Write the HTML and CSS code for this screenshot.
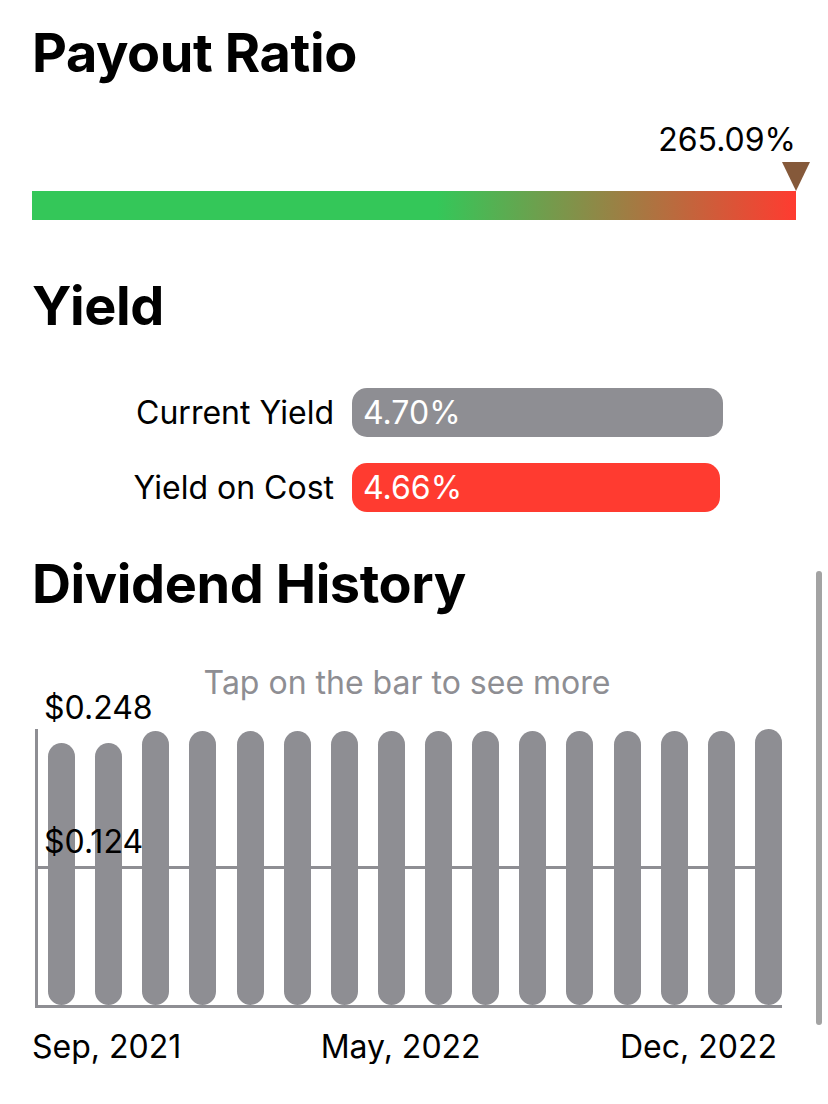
FILE: index.html
```html
<!DOCTYPE html>
<html lang="en">
<head>
    <meta charset="UTF-8">
    <meta name="viewport" content="width=device-width, initial-scale=1.0">
    <title>Dividend Details</title>
    <link rel="stylesheet" href="styles.css">
</head>
<body>
    <div class="scrollbar"></div>

    <h1 class="title title-first">Payout Ratio</h1>
    <div class="gauge">
        <div class="gauge-value">265.09%</div>
        <div class="gauge-track">
            <div class="gauge-marker" style="left: 100%"></div>
        </div>
    </div>

    <h1 class="title title-yield">Yield</h1>
    <div class="yield-grid">
        <div class="yield-label">Current Yield</div>
        <div class="yield-bar yield-current" style="width: 100%">4.70%</div>
        <div class="yield-label">Yield on Cost</div>
        <div class="yield-bar yield-cost" style="width: 99.1%">4.66%</div>
    </div>

    <h1 class="title title-history">Dividend History</h1>
    <div class="chart">
        <div class="chart-hint">Tap on the bar to see more</div>
        <div class="plot">
            <div class="plot-label label-max">$0.248</div>
            <div class="plot-label label-mid">$0.124</div>
            <div class="gridline"></div>
            <div class="bars">
                <div class="bar" style="height: 95%"></div>
                <div class="bar" style="height: 95%"></div>
                <div class="bar" style="height: 99.3%"></div>
                <div class="bar" style="height: 99.3%"></div>
                <div class="bar" style="height: 99.3%"></div>
                <div class="bar" style="height: 99.3%"></div>
                <div class="bar" style="height: 99.3%"></div>
                <div class="bar" style="height: 99.3%"></div>
                <div class="bar" style="height: 99.3%"></div>
                <div class="bar" style="height: 99.3%"></div>
                <div class="bar" style="height: 99.3%"></div>
                <div class="bar" style="height: 99.3%"></div>
                <div class="bar" style="height: 99.3%"></div>
                <div class="bar" style="height: 99.3%"></div>
                <div class="bar" style="height: 99.3%"></div>
                <div class="bar" style="height: 100%"></div>
            </div>
        </div>
        <div class="axis-labels">
            <span>Sep, 2021</span>
            <span>May, 2022</span>
            <span>Dec, 2022</span>
        </div>
    </div>
</body>
</html>
```

FILE: styles.css
```css
body {
    font-family: Inter, "Noto Sans", sans-serif;
    margin: 0;
    padding: 0 32px;
    background: #fff;
    color: #000;
    font-size: 32px;
    line-height: 34px;
}
.title {
    font-size: 54px;
    font-weight: 700;
    line-height: 60px;
    margin: 0;
    letter-spacing: -0.4px;
}
.title-first { padding-top: 23px; }
.title-yield { margin-top: 56px; }
.title-history { margin-top: 42px; }

.scrollbar {
    position: absolute;
    left: 816px;
    top: 571px;
    width: 6px;
    height: 454px;
    border-radius: 3px;
    background: #a3a3a3;
}

.gauge {
    margin-top: 40px;
}
.gauge-value {
    text-align: right;
}
.gauge-track {
    position: relative;
    margin-top: 34px;
    height: 29px;
    background: linear-gradient(to right, #34c759 0%, #34c759 53%, #ff3b30 100%);
}
.gauge-marker {
    position: absolute;
    bottom: 100%;
    width: 28px;
    height: 29px;
    margin-left: -14px;
    background: #85593a;
    clip-path: polygon(0 0, 100% 0, 50% 100%);
}

.yield-grid {
    display: grid;
    grid-template-columns: 302px 371px;
    column-gap: 18px;
    row-gap: 26px;
    margin-top: 52px;
    align-items: center;
}
.yield-label {
    text-align: right;
}
.yield-bar {
    height: 49px;
    line-height: 49px;
    border-radius: 15px;
    padding-left: 11px;
    box-sizing: border-box;
    color: #fff;
}
.yield-current { background: #8e8e93; }
.yield-cost { background: #ff3b30; }

.chart {
    margin-top: 52px;
}
.chart-hint {
    color: #8e8e93;
    text-align: center;
    width: 750px;
}
.plot {
    position: relative;
    margin: 29px 0 0 3px;
    width: 744px;
    height: 276px;
    border-left: 3px solid #8e8e93;
    border-bottom: 3px solid #8e8e93;
}
.plot-label {
    position: absolute;
    left: 6px;
    z-index: 2;
}
.label-max { top: -38px; }
.label-mid { top: 96px; }
.gridline {
    position: absolute;
    left: 0;
    right: 0;
    top: 137px;
    height: 3px;
    background: #8e8e93;
}
.bars {
    position: relative;
    display: flex;
    justify-content: space-between;
    align-items: flex-end;
    height: 100%;
    padding-left: 10px;
    box-sizing: border-box;
}
.bar {
    width: 27px;
    border-radius: 14px;
    background: #8e8e93;
}
.axis-labels {
    display: flex;
    justify-content: space-between;
    width: 745px;
    margin-top: 22px;
}
```
